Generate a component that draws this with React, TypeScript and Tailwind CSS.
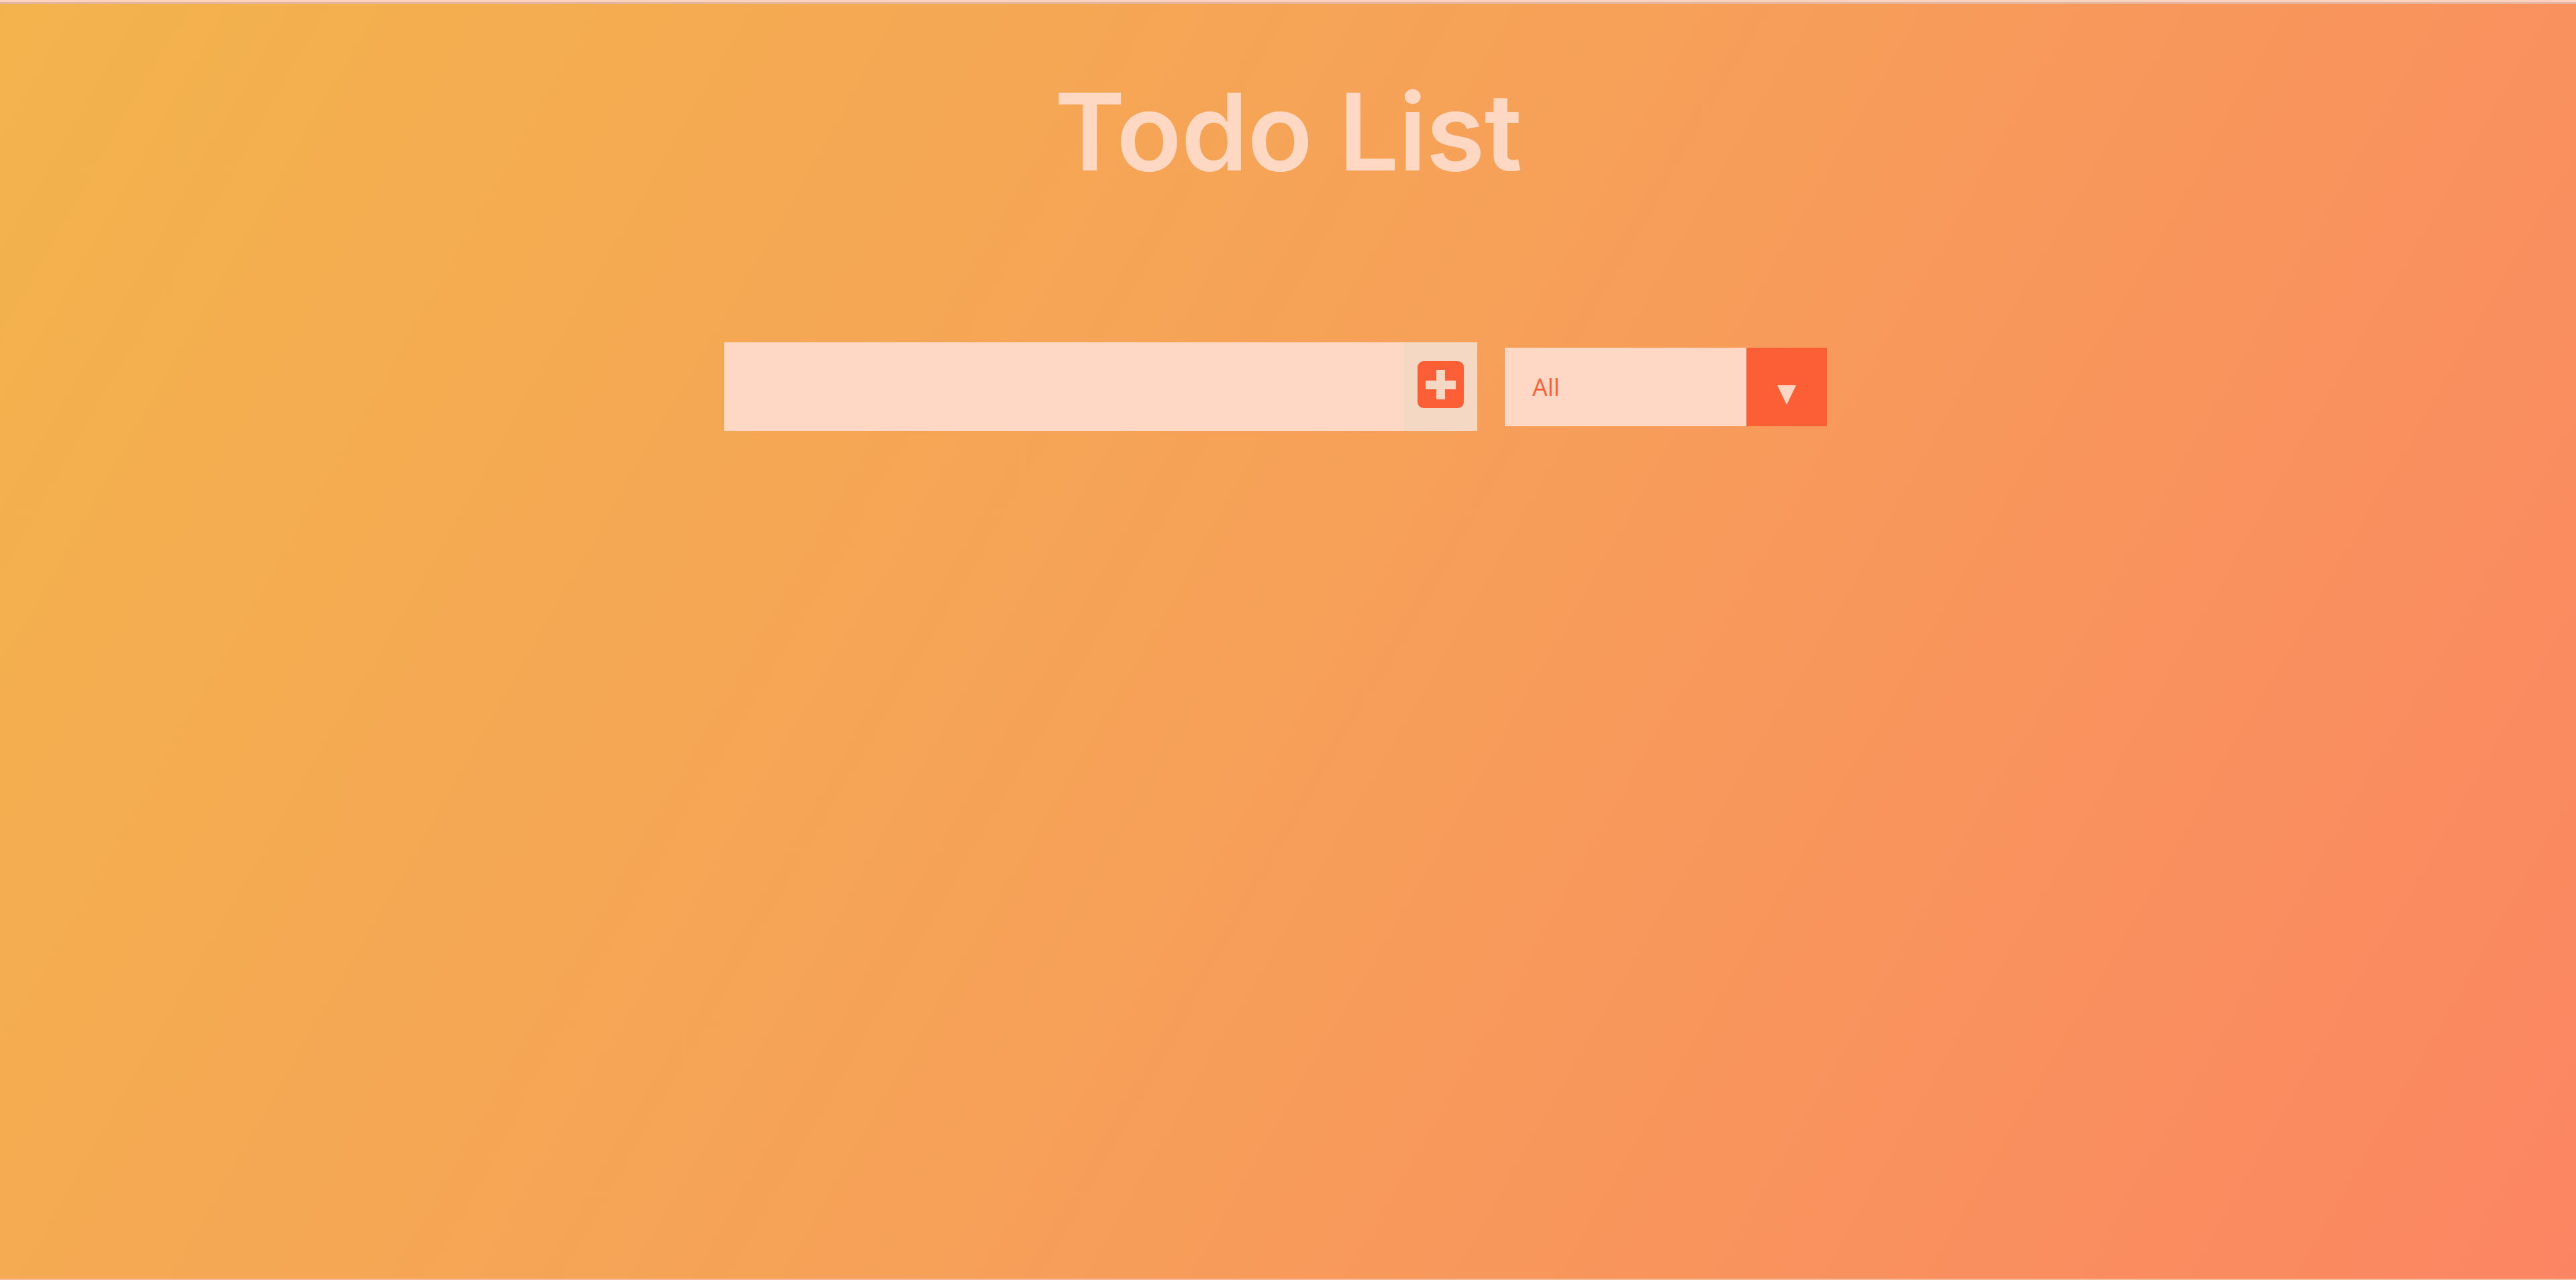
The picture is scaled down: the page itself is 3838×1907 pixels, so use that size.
import React from 'react';

function PlusSquare() {
  return (
    <svg width="69" height="70" viewBox="0 0 69 70" aria-hidden="true">
      <rect x="0" y="0" width="69" height="70" rx="9" fill="#fc5e36" />
      <rect x="12" y="29" width="45" height="13" fill="#f5d8c3" />
      <rect x="28" y="13" width="13" height="44" fill="#f5d8c3" />
    </svg>
  );
}

export default function App() {
  return (
    <div className="min-h-[1907px] w-full flex flex-col bg-[linear-gradient(120deg,#f3b34c,#f6a058,#fb8562)] font-['Inter',sans-serif]">
      <div className="h-[3px] bg-[#fdd3c0]" />
      <div className="h-[3px] bg-[#e4b6a0]" />

      <header className="flex justify-center pt-[110px]">
        <h1 className="text-[160px] leading-[1] font-semibold tracking-[-1px] text-[#ffd8c4]">Todo List</h1>
      </header>

      <form className="mt-[234px] flex items-center justify-center">
        <div className="flex h-[132px] w-[1122px] bg-[#fed8c4]">
          <input type="text" className="min-w-0 w-full flex-1 bg-transparent outline-none px-6 text-[96px] text-[#fc5e36]" />
          <button type="button" className="w-[109px] shrink-0 flex items-center justify-center bg-[#f5d8c3] pb-[6px]">
            <PlusSquare />
          </button>
        </div>

        <div className="ml-[41px] mr-[37px] flex h-[117px] w-[480px] bg-[#fed8c5]">
          <div className="flex-1 flex items-center pl-[41px] pt-[2px] text-[36px] text-[#fc5e36] font-['Open_Sans',sans-serif]">
            All
          </div>
          <div className="w-[120px] flex items-center justify-center bg-[#fc5e36] pt-[24px]">
            <svg width="28" height="29" viewBox="0 0 28 29" aria-hidden="true">
              <polygon points="0,0 28,0 14,29" fill="#fed8c5" />
            </svg>
          </div>
        </div>
      </form>

      <div className="flex-1" />
      <div className="h-[2px] bg-[#f7b898]" />
    </div>
  );
}
